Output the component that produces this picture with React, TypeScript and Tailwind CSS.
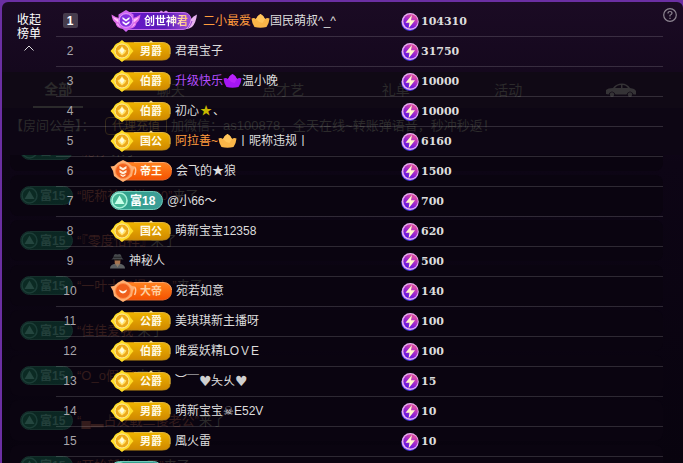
import { useId } from 'react'
import { clsx } from 'clsx'

type BadgeKind = 'gold' | 'emperor' | 'king' | 'god' | 'rich' | 'mystery'

interface NamePart {
  text?: string
  crown?: 'gold' | 'purple'
  tone?: 'orange' | 'purple' | 'star' | 'heart'
}

interface RankRow {
  kind: BadgeKind
  label: string
  name: NamePart[]
  score: string
}

const rows: RankRow[] = [
  {
    kind: 'god',
    label: '创世神君',
    name: [{ text: '二小最爱', tone: 'orange' }, { crown: 'gold' }, { text: '国民萌叔^_^' }],
    score: '104310',
  },
  { kind: 'gold', label: '男爵', name: [{ text: '君君宝子' }], score: '31750' },
  {
    kind: 'gold',
    label: '伯爵',
    name: [{ text: '升级快乐', tone: 'purple' }, { crown: 'purple' }, { text: '温小晚' }],
    score: '10000',
  },
  {
    kind: 'gold',
    label: '伯爵',
    name: [{ text: '初心' }, { text: '★', tone: 'star' }, { text: '、' }],
    score: '10000',
  },
  {
    kind: 'gold',
    label: '国公',
    name: [{ text: '阿拉善~', tone: 'orange' }, { crown: 'gold' }, { text: '丨昵称违规丨' }],
    score: '6160',
  },
  { kind: 'king', label: '帝王', name: [{ text: '会飞的★狼' }], score: '1500' },
  { kind: 'rich', label: '富18', name: [{ text: '@小66～' }], score: '700' },
  { kind: 'gold', label: '国公', name: [{ text: '萌新宝宝12358' }], score: '620' },
  { kind: 'mystery', label: '', name: [{ text: '神秘人' }], score: '500' },
  { kind: 'emperor', label: '大帝', name: [{ text: '宛若如意' }], score: '140' },
  { kind: 'gold', label: '公爵', name: [{ text: '美琪琪新主播呀' }], score: '100' },
  { kind: 'gold', label: '伯爵', name: [{ text: '唯爱妖精LOＶE' }], score: '100' },
  {
    kind: 'gold',
    label: '公爵',
    name: [{ text: '︶￣' }, { text: '♥', tone: 'heart' }, { text: '夨乆' }, { text: '♥', tone: 'heart' }],
    score: '15',
  },
  { kind: 'gold', label: '男爵', name: [{ text: '萌新宝宝☠E52V' }], score: '10' },
  { kind: 'gold', label: '男爵', name: [{ text: '風火雷' }], score: '10' },
  { kind: 'rich', label: '富18', name: [], score: '' },
]

const messages = ['昵称', '昵称神印洪700', '『零度怡祥』', '一叶十年慢！！', '佳佳爱我', 'O_o假面', '▄▂占友戰二傻老公', '开始新的一天']

function GoldArt() {
  const id = useId()
  return (
    <svg className="absolute inset-0" width="61" height="22" viewBox="0 0 61 22" aria-hidden="true">
      <defs>
        <linearGradient id={id} x1="0" y1="0" x2="0" y2="1">
          <stop offset="0" stopColor="#efb400" />
          <stop offset="1" stopColor="#cf8800" />
        </linearGradient>
      </defs>
      <path d="M10 2.500H52Q60 3 60 8V14Q60 20 52 20H10Z" fill={`url(#${id})`} stroke="#c08a10" />
      <path d="M24 2.500H52Q59.500 3 60 9V14" fill="none" stroke="#e9c04a" strokeWidth="0.800" />
      <path d="M38.500 2.500L41 0.500L43.500 2.500Z" fill="#ffe28a" />
      <path d="M12 0L15 2.500Q19 3.500 20.500 7.500L23.500 11L20.500 14.500Q19 18.500 15 19.500L12 22L9 19.500Q5 18.500 3.500 14.500L0.500 11L3.500 7.500Q5 3.500 9 2.500Z" fill="#ffdc28" />
      <circle cx="12" cy="11" r="7" fill="#eda91c" stroke="#fff0a0" strokeWidth="1" />
      <path d="M12 5.500Q12.500 8.500 16.500 10.500Q15.500 13.500 12 15.500Q8.500 13.500 7.500 10.500Q11.500 8.500 12 5.500Z" fill="#ffe36a" />
      <path d="M12 7L14.500 10.500L12 14L9.500 10.500Z" fill="#fffbd6" />
    </svg>
  )
}

function OrangeArt({ mark }: { mark: 'king' | 'emperor' }) {
  const id = useId()
  return (
    <svg className="absolute inset-0" width="62" height="22" viewBox="0 0 62 22" aria-hidden="true">
      <defs>
        <linearGradient id={id} x1="0" y1="0" x2="0" y2="1">
          <stop offset="0" stopColor="#ff8420" />
          <stop offset="1" stopColor="#f55200" />
        </linearGradient>
      </defs>
      <path d="M14 2.500H53Q61.500 3 61.500 11T53 20H14Z" fill={`url(#${id})`} stroke="#e0662a" />
      <path d="M24 2.500H53Q61 3 61.500 10" fill="none" stroke="#ffb070" strokeWidth="0.800" />
      <path d="M37.500 2.500L40.500 0.500L43.500 2.500Z" fill="#ffd0a0" />
      <path d="M24.500 7Q27 10 24.500 15" fill="none" stroke="#ffc9a0" strokeWidth="1.500" />
      <path d="M0.500 6.500L4 6L8 2.500L13 0L18 2.500L22 6L25 6.500L23 11L22 16L18 19L13 22L8 19L4 16L3 11Z" fill="#ffae70" />
      <circle cx="13" cy="11" r="7.500" fill="#f0601c" stroke="#ff8c48" strokeWidth="1" />
      {mark === 'king' ? (
        <path d="M9.500 6L13 8L16.500 6V8.500L13 10.500L9.500 8.500ZM9.500 10L13 12L16.500 10V12.500L13 14.500L9.500 12.500ZM10.500 14L13 15.500L15.500 14V15.500L13 17L10.500 15.500Z" fill="#fff1dc" />
      ) : (
        <path d="M9 9.500L13 11.500L17 9.500Q16.500 13 13 13.500Q9.500 13 9 9.500Z" fill="#fff8ec" />
      )}
    </svg>
  )
}

function GodArt() {
  const id = useId()
  return (
    <svg className="absolute inset-0" width="89" height="22" viewBox="0 0 89 22" aria-hidden="true">
      <defs>
        <linearGradient id={id} x1="0" y1="0" x2="1" y2="0">
          <stop offset="0" stopColor="#6a16cc" />
          <stop offset="0.600" stopColor="#5b1ab8" />
          <stop offset="1" stopColor="#a050d8" />
        </linearGradient>
      </defs>
      <path d="M14 2.500H74Q80 3 81 9Q80 19.500 73 19.500H16Z" fill={`url(#${id})`} stroke="#c06be8" />
      <path d="M76 19Q80 15 81 9Q83 6 87 4.500Q86 13 82 17Q79 19 76 19Z" fill="#e9b3f0" />
      <path d="M78 18Q81 15 82 11" fill="none" stroke="#9b44d0" />
      <path d="M49 2.500L51 0.500L53.500 2L56 0.500L59 2.500Z" fill="#d88cf2" />
      <path d="M13 19Q6 18 5.500 13Q2 10.500 1.500 4.500Q5 7 9 8ZM19 19Q26 18 26.500 13Q30 10.500 30.500 4.500Q27 7 23 8Z" fill="#e06be8" />
      <path d="M10 13Q5 11 3 7L9 9.500ZM22 13Q27 11 29 7L23 9.500ZM11 17Q7.500 16 7 13.500L11 14.500ZM21 17Q24.500 16 25 13.500L21 14.500Z" fill="#ffc0fa" />
      <path d="M16 0L23.500 4.500V15L16 22L8.500 15V4.500Z" fill="#cf66f2" />
      <circle cx="16" cy="10.500" r="6.800" fill="#8430e0" stroke="#f0a8ff" strokeWidth="0.800" />
      <path d="M12.500 7L16 9.500L19.500 7V9L16 11.500L12.500 9ZM12.500 11L16 13.500L19.500 11V13L16 15.500L12.500 13Z" fill="#fff" />
    </svg>
  )
}

function RichBadge({ label, dim }: { label: string; dim?: boolean }) {
  return (
    <span
      className={clsx(
        'flex h-[19px] w-[53px] shrink-0 items-center gap-0.5 rounded-full border bg-linear-to-r font-bold',
        dim
          ? 'border-[#16302c] from-[#0a2620] to-[#0b2724] text-[#23403b]'
          : 'border-[#6fc9b8] from-[#2ca387] to-[#3d9d98] text-white'
      )}
    >
      <svg width="17" height="17" viewBox="0 0 17 17" className="shrink-0" aria-hidden="true">
        <circle cx="8.500" cy="8.500" r="7.500" fill={dim ? '#0b2a23' : '#45b594'} stroke={dim ? '#1c3d37' : '#a5f0d8'} strokeWidth="1.600" />
        <path d="M8.500 3.500L13.500 12H3.500Z" fill={dim ? '#24463f' : '#c9ffe9'} />
      </svg>
      <span className="text-[12px] leading-4">{label}</span>
    </span>
  )
}

function MysteryIcon() {
  return (
    <svg width="15" height="16" viewBox="0 0 16 16" role="img" aria-label="神秘人">
      <path d="M0 16Q0 12 5 11H11Q16 12 16 16Z" fill="#5c5f62" />
      <path d="M5 6H11V10Q10 13 8 13Q6 13 5 10Z" fill="#a8734e" />
      <path d="M6 11H10L8 15Z" fill="#8b7d6e" />
      <path d="M5 5.500H11V7.500H5Z" fill="#24211f" />
      <path d="M3.500 4.500Q4 0.500 6 0.500L8 1L10 0.500Q12 0.500 12.500 4.500L14.500 6.500Q8 5 1.500 6.500Z" fill="#45484b" />
      <path d="M4 3.500H12V4.500H4Z" fill="#1f2022" />
    </svg>
  )
}

function Badge({ kind, label }: { kind: BadgeKind; label: string }) {
  if (kind === 'rich') return <RichBadge label={label} />
  if (kind === 'mystery') return <MysteryIcon />
  if (kind === 'god') {
    return (
      <span className="relative flex h-[22px] w-[89px] items-center pl-[34px]">
        <GodArt />
        <span className="relative bg-linear-to-r from-white from-60% to-[#ffb866] bg-clip-text text-[11px] leading-4 font-bold text-transparent">
          {label}
        </span>
      </span>
    )
  }
  return (
    <span className={clsx('relative flex h-[22px] items-center pl-[30px]', kind === 'gold' ? 'w-[61px]' : 'w-[62px]')}>
      {kind === 'gold' ? <GoldArt /> : <OrangeArt mark={kind} />}
      <span
        className={clsx(
          'relative text-[11px] leading-4 font-bold',
          kind === 'emperor' ? 'text-[#ffd0a0]' : 'text-[#fffbe8]'
        )}
      >
        {label}
      </span>
    </span>
  )
}

function Crown({ color }: { color: 'gold' | 'purple' }) {
  return (
    <svg width="19" height="14" viewBox="0 0 19 14" className="shrink-0" aria-hidden="true">
      <path
        d="M0.500 4.500Q3 3.500 5 5Q6.500 1.500 9.500 0Q12.500 1.500 14 5Q16 3.500 18.500 4.500Q18 10 15.500 13Q9.500 14.500 3.500 13Q1 10 0.500 4.500Z"
        fill={color === 'gold' ? '#f9b548' : '#a516f5'}
      />
      <path
        d="M5 5Q6.500 1.500 9.500 0Q12.500 1.500 14 5L11.500 9Q7 8 5 5Z"
        fill={color === 'gold' ? '#ffc55c' : '#b822fa'}
      />
    </svg>
  )
}

function Coin() {
  const id = useId()
  return (
    <svg width="18" height="18" viewBox="0 0 18 18" className="shrink-0" aria-hidden="true">
      <defs>
        <linearGradient id={id} x1="0.800" y1="0" x2="0.200" y2="1">
          <stop offset="0" stopColor="#f25a98" />
          <stop offset="0.500" stopColor="#a028cc" />
          <stop offset="1" stopColor="#5010e8" />
        </linearGradient>
      </defs>
      <circle cx="8.800" cy="9.500" r="8.500" fill="#4a35e8" />
      <circle cx="9.200" cy="8.600" r="8.500" fill="#eab0f0" />
      <circle cx="9.600" cy="8.400" r="7.200" fill={`url(#${id})`} />
      <path d="M11 2L4.500 9.800H8.500L7.500 15.500L14 7.200H10Z" fill="#fff6c8" />
    </svg>
  )
}

function Name({ parts }: { parts: NamePart[] }) {
  return (
    <span className="flex items-center whitespace-nowrap">
      {parts.map((part, i) =>
        part.crown ? (
          <Crown key={i} color={part.crown} />
        ) : (
          <span
            key={i}
            className={clsx(
              part.tone === 'orange' && 'text-[#ff9b3d]',
              part.tone === 'purple' && 'text-[#b44cff]',
              part.tone === 'star' && 'w-3.5 text-center text-[#c9b800]',
              part.tone === 'heart' && 'w-3 text-center font-["DejaVu_Sans",sans-serif] text-[14px] text-[#cfcfcf]'
            )}
          >
            {part.text}
          </span>
        )
      )}
    </span>
  )
}

// Room chat that stays faintly visible behind the ranking
function ChatRoom() {
  return (
    <div className="flex h-full flex-col pt-[70px] text-[#2b2a2b]" aria-hidden="true">
      <div className="grid h-9 grid-cols-6 items-center bg-[#100915] pr-1.5 text-[14px] leading-5">
        <span className="mx-auto flex h-9 w-[50px] items-center justify-center border-b-2 border-[#2b2a2b] font-bold">全部</span>
        <span className="text-center">聊天</span>
        <span className="text-center">点才艺</span>
        <span className="text-center">礼单</span>
        <span className="text-center">活动</span>
        <svg width="30" height="14" viewBox="0 0 30 14" className="mx-auto">
          <path d="M0 11V7Q2 5 7 5Q10 0.500 16 0.500Q21 0.500 24 5Q29 5.500 30 8V11.500H27.500Q26 8.500 24 8.500T20.500 11.500H9.500Q8 8.500 6 8.500T2.500 11.500Z" fill="#353336" />
          <path d="M9 5Q11 2 15 2V5ZM16.500 2Q20 2 22 5H16.500Z" fill="#100915" />
          <circle cx="6" cy="11.500" r="2.200" fill="#353336" />
          <circle cx="24" cy="11.500" r="2.200" fill="#353336" />
        </svg>
      </div>
      <div className="flex h-[47px] items-center bg-[#0d0614] pb-3 pl-2 text-[13px] leading-5 whitespace-nowrap">
        <span className="w-[95px]">【房间公告】：</span>
        <span className="mr-1 flex h-[18px] w-[62px] items-center justify-center rounded-sm border border-[#33271a] text-[12px] text-[#3a2d1e]">
          代理充值
        </span>
        <span>加微信：as100878，全天在线~转账弹语音，秒冲秒返！</span>
      </div>
      <div className="flex flex-1 flex-col justify-start overflow-hidden">
        <div className="-mt-[25px] flex flex-col gap-1">
          {messages.map((who) => (
            <div
              key={who}
              className="mr-5 ml-2 flex h-[41px] shrink-0 items-center gap-1 rounded-lg bg-[#0a0410] pl-2.5 text-[13px] leading-5 whitespace-nowrap"
            >
              <RichBadge label="富15" dim />
              <span>
                <span className="text-[#341c1c]">“{who}”</span>来了
              </span>
            </div>
          ))}
        </div>
      </div>
    </div>
  )
}

export default function App() {
  return (
    <main className='h-screen overflow-hidden bg-[#6b2fa3] pt-0.5 pl-0.5 font-["Liberation_Sans","Noto_Sans_CJK_SC",sans-serif]'>
      <div className="relative h-full overflow-hidden rounded-t-md bg-linear-to-b from-[#1b0b24] via-[#0d0515] via-35% to-[#08030e]">
        <ChatRoom />
        <section className="absolute inset-0 flex items-start overflow-hidden pt-[5px]" aria-label="榜单">
          <button type="button" className="flex w-[54px] shrink-0 flex-col items-center pt-1.5 text-[12px] leading-[14px] text-white">
            <span>收起</span>
            <span>榜单</span>
            <svg width="10" height="6" viewBox="0 0 10 6" className="mt-1" fill="none" stroke="#ddd" aria-hidden="true">
              <path d="M0.500 5.500L5 1L9.500 5.500" />
            </svg>
          </button>
          <table className="flex-1 border-collapse text-[12px] leading-4 text-[#dddddd]">
            <tbody className="block">
              {rows.map((row, i) => (
                <tr key={i} className="flex h-[30px] items-center border-b border-white/15">
                  <td className="flex w-7 justify-center pb-0.5 text-[#a9a6ab]">
                    {i === 0 ? (
                      <span className="flex size-[15px] items-center justify-center rounded-xs bg-[#463c4d] font-bold text-white">1</span>
                    ) : (
                      i + 1
                    )}
                  </td>
                  <td className="flex min-w-0 flex-1 items-center gap-1 pb-0.5 pl-[26px]">
                    <Badge kind={row.kind} label={row.label} />
                    <Name parts={row.name} />
                  </td>
                  <td className="w-[262px] shrink-0">
                    {row.score && (
                      <span className='flex items-center gap-0.5 font-["DejaVu_Serif",serif] text-[11px] font-bold'>
                        <Coin />
                        {row.score}
                      </span>
                    )}
                  </td>
                </tr>
              ))}
            </tbody>
          </table>
          <button type="button" aria-label="帮助" className="mt-px mr-1.5 shrink-0">
            <svg width="14" height="14" viewBox="0 0 14 14" fill="none" stroke="#8d8591" strokeWidth="1.200">
              <circle cx="7" cy="7" r="6.300" />
              <path d="M5 5.500Q5 3.500 7 3.500T9 5.300Q9 6.300 7 7.300V8.500M7 9.700V11" />
            </svg>
          </button>
        </section>
      </div>
    </main>
  )
}
